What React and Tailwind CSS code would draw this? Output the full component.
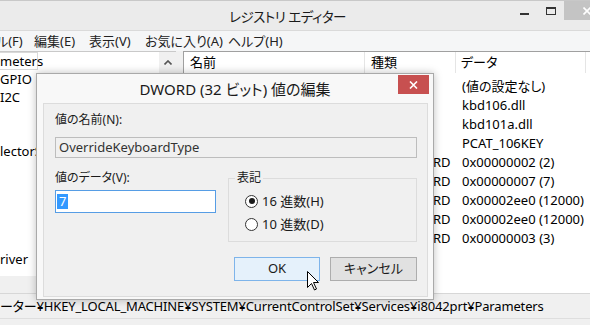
import React from 'react';

const treeRows = ['meters', 'GPIO', 'I2C', '', '', 'lectorS', '', '', '', '', '', 'river'];

const values = [
  { name: '(既定)', type: 'REG_SZ', data: '(値の設定なし)' },
  { name: 'LayerDriver JPN', type: 'REG_SZ', data: 'kbd106.dll' },
  { name: 'LayerDriver KOR', type: 'REG_SZ', data: 'kbd101a.dll' },
  { name: 'OverrideKeyboardIdentifier', type: 'REG_SZ', data: 'PCAT_106KEY' },
  { name: 'OverrideKeyboardSubtype', type: 'REG_DWORD', data: '0x00000002 (2)' },
  { name: 'OverrideKeyboardType', type: 'REG_DWORD', data: '0x00000007 (7)' },
  { name: 'PollingIterations', type: 'REG_DWORD', data: '0x00002ee0 (12000)' },
  { name: 'PollingIterationsMaximum', type: 'REG_DWORD', data: '0x00002ee0 (12000)' },
  { name: 'ResendIterations', type: 'REG_DWORD', data: '0x00000003 (3)' },
];

const menus = [
  { label: 'ル(F)', w: 'w-[38px]' },
  { label: '編集(E)', w: 'w-[55px]' },
  { label: '表示(V)', w: 'w-[56px]' },
  { label: 'お気に入り(A)', w: 'w-[83px]' },
  { label: 'ヘルプ(H)', w: 'w-[70px]' },
];

const Radio = ({ checked, label }) => (
  <div className="flex items-center h-[16px] leading-[16px]">
    <span className="flex items-center justify-center w-[13px] h-[13px] rounded-full border border-[#333] bg-white">
      {checked && <span className="w-[6px] h-[6px] rounded-full bg-[#1a1a1a]" />}
    </span>
    <span className="ml-[4px]">{label}</span>
  </div>
);

const App = () => {
  return (
    <div className="relative w-[590px] h-[325px] overflow-hidden bg-[#f0f0f0] text-[13px] text-black [font-family:'Noto_Sans','Noto_Sans_CJK_JP',sans-serif] [font-feature-settings:'palt']">
      {/* title bar */}
      <div className="flex h-[30px] items-start bg-[#ebebeb] border-t border-[#c8c8c8]">
        <div className="w-[229px] shrink-0" />
        <div className="pt-[6px] text-[13.5px] tracking-[-0.5px] leading-[20px] text-[#1a1a1a] whitespace-nowrap">レジストリ エディター</div>
        <div className="flex-1" />
        <div className="flex shrink-0 -mr-[19px]">
          <div className="w-[26px] h-[20px] flex justify-center pt-[12px]">
            <div className="w-[9px] h-[2px] bg-[#333]" />
          </div>
          <div className="w-[27px] h-[20px] flex justify-center pt-[6px]">
            <div className="w-[10px] h-[8px] border border-t-2 border-[#333]" />
          </div>
          <div className="w-[45px] h-[19px] bg-[#c4c4c4] flex justify-center pt-[6px]">
            <svg width="8" height="8" viewBox="0 0 8 8">
              <path d="M0.5 0.5 L7.5 7.5 M7.5 0.5 L0.5 7.5" stroke="#fff" strokeWidth="1.6" />
            </svg>
          </div>
        </div>
      </div>

      {/* menu bar */}
      <div className="flex h-[21px] items-center bg-[#f5f6f7] border-t border-[#dadada] text-[13px] text-[#222]">
        <div className="flex -ml-[4px]">
          {menus.map((m, i) => (
            <div key={i} className={`${m.w} shrink-0 whitespace-nowrap leading-[20px]`}>{m.label}</div>
          ))}
        </div>
      </div>

      {/* panes */}
      <div className="flex h-[242px]">
        <div className="w-[176px] flex flex-col border-t border-[#c9c9c9]">
          <div className="flex flex-1 bg-white">
            <div className="flex-1">
              {treeRows.map((t, i) => (
                <div key={i} className="h-[18px] leading-[18px] whitespace-nowrap">
                  {i === 0 ? (
                    <span className="inline-block h-[18px] w-[38px] border border-l-0 border-[#d9d9d9] leading-[16px]">{t}</span>
                  ) : (
                    t
                  )}
                </div>
              ))}
            </div>
            <div className="w-[17px] bg-[#f0f0f0] flex flex-col items-center">
              <div className="h-[20px] flex items-center">
                <svg width="8" height="5" viewBox="0 0 8 5">
                  <path d="M0.5 4.5 L4 1 L7.5 4.5" fill="none" stroke="#555" strokeWidth="1.6" />
                </svg>
              </div>
            </div>
          </div>
          <div className="h-[17px] bg-[#f0f0f0]" />
        </div>
        <div className="w-[7px] bg-[#f0f0f0]" />
        <div className="flex-1 bg-white border-l border-t border-[#a0a0a0] overflow-hidden">
          <div className="flex h-[21px] items-center whitespace-nowrap">
            <div className="w-[181px] h-full pl-[6px] leading-[21px] border-r border-[#e5e5e5]">名前</div>
            <div className="w-[91px] h-full pl-[6px] leading-[21px] border-r border-[#e5e5e5]">種類</div>
            <div className="w-[130px] h-full pl-[5px] leading-[21px] border-r border-[#e5e5e5]">データ</div>
            <div className="flex-1" />
          </div>
          <div className="pt-[4px]">
            {values.map((v, i) => (
              <div key={i} className="flex h-[19px] leading-[19px] whitespace-nowrap">
                <div className="w-[181px] pl-[6px] overflow-hidden">{v.name}</div>
                <div className="w-[91px] pl-[6px] overflow-hidden">{v.type}</div>
                <div className="w-[130px] pl-[6px]">{v.data}</div>
              </div>
            ))}
          </div>
        </div>
      </div>

      {/* status bar */}
      <div className="h-[25px] bg-[#f0f0f0] border-t border-[#d7d7d7] leading-[24px] whitespace-nowrap text-[13px] tracking-[-0.15px]">
        ーター¥HKEY_LOCAL_MACHINE¥SYSTEM¥CurrentControlSet¥Services¥i8042prt¥Parameters
      </div>
      <div className="h-[7px] bg-[#f0f0f0] border-t border-[#dedede]" />

      {/* dialog */}
      <div className="absolute left-[36px] top-[73px] w-[398px] h-[227px] bg-[#f8f8f8] border border-[#a9a9a9] shadow-[0_0_8px_rgba(0,0,0,0.25)] flex flex-col">
        <div className="relative h-[29px] flex justify-center pt-[4px] text-[15px] leading-[22px] text-[#1a1a1a] whitespace-nowrap">
          DWORD (32 ビット) 値の編集
          <div className="absolute right-[4px] top-[1px] w-[31px] h-[19px] bg-[#c75050] flex items-center justify-center">
            <svg width="9" height="8" viewBox="0 0 9 8">
              <path d="M1 0.5 L8 7.5 M8 0.5 L1 7.5" stroke="#fff" strokeWidth="1.6" />
            </svg>
          </div>
        </div>
        <div className="ml-[6px] mr-[5px] h-[194px] bg-[#f0f0f0] border border-[#dcdcdc] pl-[11px] pr-[10px] pt-[8px] text-[12px] text-[#1a1a1a]">
          <div className="leading-[16px]">値の名前(N):</div>
          <div className="mt-[9px] h-[21px] border border-[#bdbdbd] bg-[#f0f0f0] pl-[3px] leading-[19px] text-[13px] text-[#333]">
            OverrideKeyboardType
          </div>
          <div className="flex">
            <div className="w-[161px]">
              <div className="mt-[12px] leading-[16px]">値のデータ(V):</div>
              <div className="mt-[4px] h-[23px] border border-[#569de5] bg-white flex items-center pl-[1px]">
                <span className="bg-[#3399ff] text-white text-[13px] leading-[15px] px-[2px]">7</span>
              </div>
            </div>
            <fieldset className="ml-[12px] mt-[12px] w-[189px] border border-[#dcdcdc] pl-[6px] pb-[9px]">
              <legend className="px-[2px] leading-[16px]">表記</legend>
              <div className="ml-[10px] mt-[7px] flex flex-col gap-[7px] text-[13px]">
                <Radio checked label="16 進数(H)" />
                <Radio label="10 進数(D)" />
              </div>
            </fieldset>
          </div>
          <div className="mt-[15px] flex justify-end gap-[10px] text-[13px]">
            <div className="w-[86px] h-[24px] bg-[#e5f1fb] border border-[#7eb4ea] flex items-center justify-center">OK</div>
            <div className="w-[87px] h-[24px] bg-[#e1e1e1] border border-[#adadad] flex items-center justify-center">キャンセル</div>
          </div>
        </div>
      </div>

      {/* mouse pointer */}
      <svg className="absolute left-[307px] top-[271px]" width="13" height="20" viewBox="0 0 13 20">
        <path d="M0.5 0.5 L0.5 16.5 L4.5 12.5 L7.5 19 L9.5 18 L6.5 11.5 L11.5 11.5 Z" fill="#fff" stroke="#000" strokeWidth="1" strokeLinejoin="miter" />
      </svg>
    </div>
  );
};

export default App;
